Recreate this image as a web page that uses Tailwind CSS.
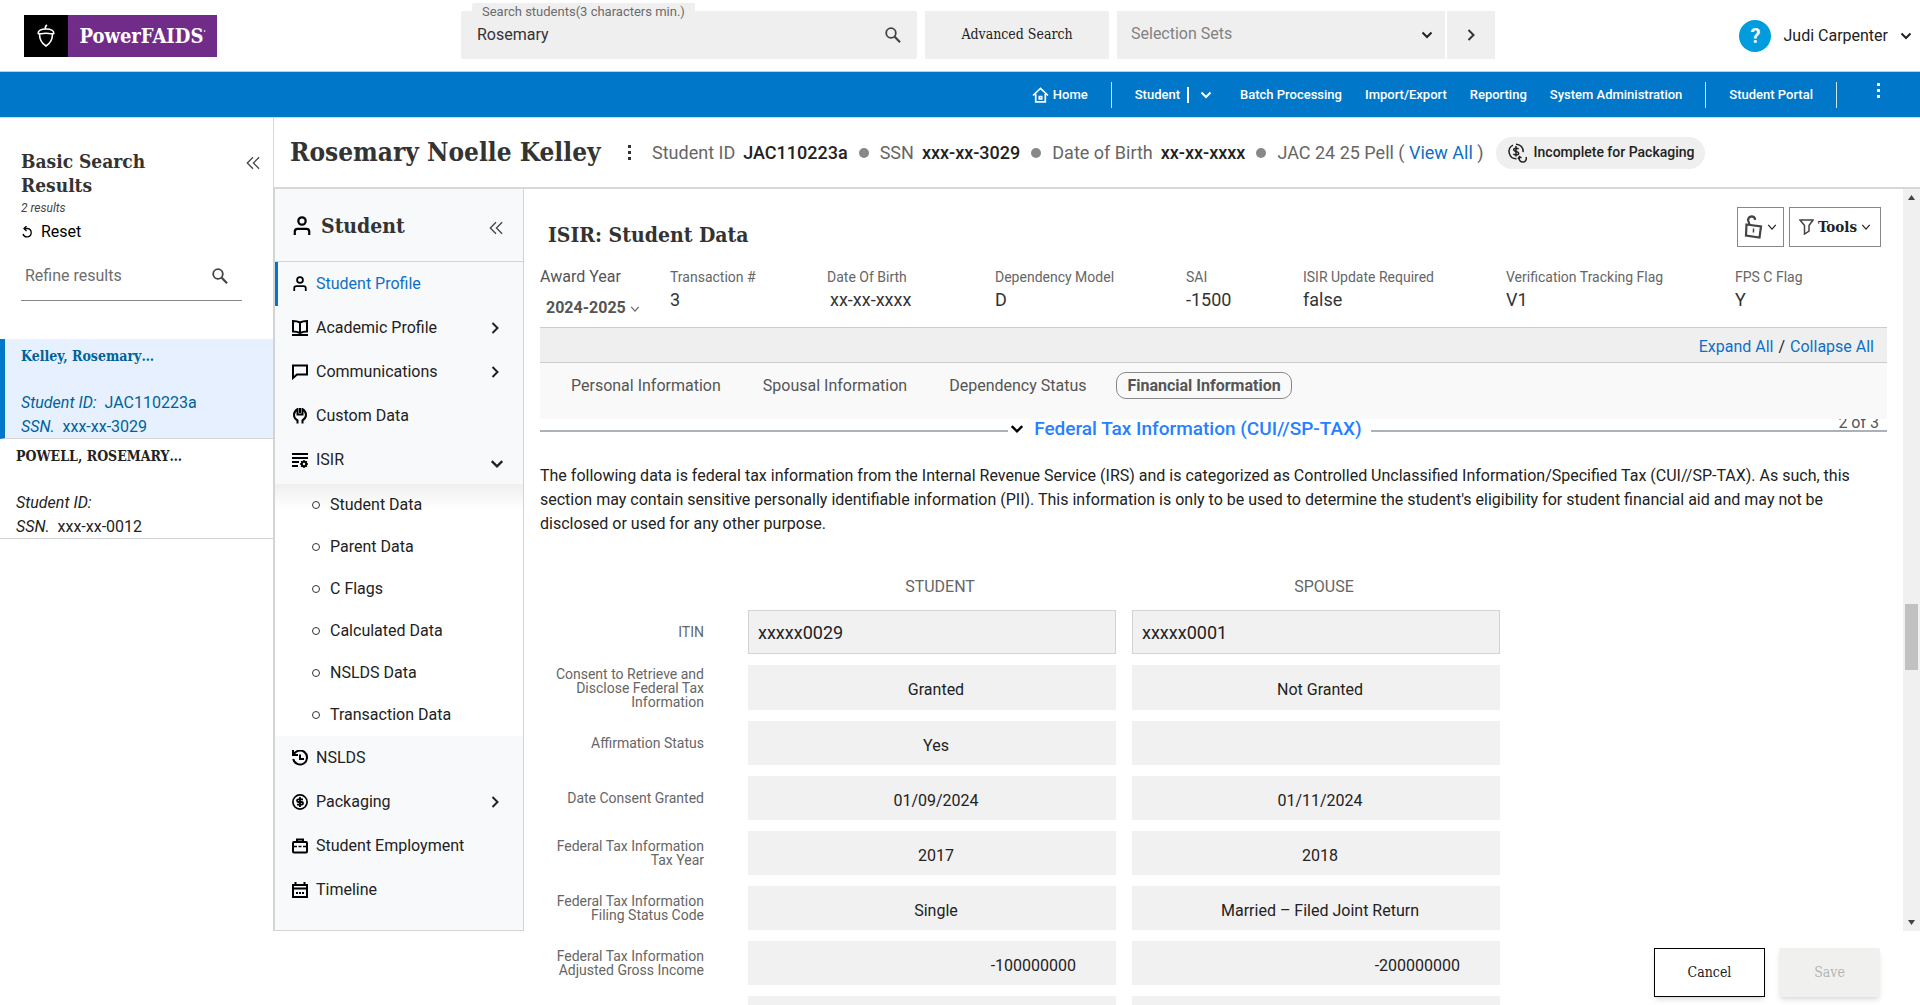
<!DOCTYPE html>
<html lang="en">
<head>
<meta charset="utf-8">
<meta name="viewport" content="width=device-width, initial-scale=1">
<title>PowerFAIDS - ISIR: Student Data</title>
<script src="https://cdn.jsdelivr.net/npm/@tailwindcss/browser@4"></script>
</head>
<body class="flex h-screen flex-col overflow-hidden bg-white font-[Roboto,sans-serif] text-base text-[#222]">
<svg class="hidden" aria-hidden="true">
  <symbol id="chev-down" viewBox="0 0 12 12"><path d="M1.500 3.500 6 8l4.500-4.500" fill="none" stroke="currentColor" stroke-width="2"/></symbol>
  <symbol id="chev-thin" viewBox="0 0 12 12"><path d="M1.500 3.500 6 8.500l4.500-5" fill="none" stroke="currentColor" stroke-width="1.500"/></symbol>
  <symbol id="chev-right" viewBox="0 0 12 12"><path d="M3.500 1 8.500 6l-5 5" fill="none" stroke="currentColor" stroke-width="2"/></symbol>
  <symbol id="chev-dbl" viewBox="0 0 16 16"><path d="M8 1.500 1.500 8 8 14.500M15 1.500 8.500 8l6.500 6.500" fill="none" stroke="currentColor" stroke-width="1.500"/></symbol>
  <symbol id="glass" viewBox="0 0 16 16"><circle cx="6" cy="6" r="4.800" fill="none" stroke="currentColor" stroke-width="1.800"/><path d="m9.500 9.500 5.500 5.700" stroke="currentColor" stroke-width="2.200"/></symbol>
  <symbol id="person" viewBox="0 0 16 18"><circle cx="8" cy="4.500" r="3.300" fill="none" stroke="currentColor" stroke-width="2"/><path d="M1.500 17v-3q0-2.500 2.500-2.500h8q2.500 0 2.500 2.500v3" fill="none" stroke="currentColor" stroke-width="2"/></symbol>
</svg>

<header class="flex h-[72px] shrink-0 items-start border-b border-[#ccc] pt-[11px]">
  <a href="#" class="mt-1 ml-6 flex h-[42px] w-[193px] shrink-0" aria-label="PowerFAIDS home">
    <span class="flex w-11 items-center justify-center bg-black">
      <svg width="18" height="24" viewBox="0 0 18 24" fill="none" stroke="#fff" stroke-width="1.600"><path d="M1.200 9.500C1 6.500 4 5 9 5s8 1.500 7.800 4.500c-2.500.9-5.300-.3-7.800-.3S3.700 10.400 1.200 9.500z"/><path d="M2.500 10c0 5 2.500 9.500 6.500 12 4-2.500 6.500-7 6.500-12M8.500 5c-.5-1.500 0-3 1.500-4"/></svg>
    </span>
    <span class="flex flex-1 items-center justify-center bg-[#712c8a] font-['Roboto_Slab','DejaVu_Serif_Condensed','DejaVu_Serif',serif] text-[20px] font-bold text-white">PowerFAIDS<sup class="text-[8px]">'</sup></span>
  </a>
  <div class="relative ml-[244px] h-12 w-[456px] rounded-xs bg-[#efefef]">
    <label for="q" class="absolute -top-2 left-[11px] rounded-xs bg-[#efefef] px-[10px] text-[13px] leading-[18px] text-[#6b6b6b]">Search students(3 characters min.)</label>
    <input id="q" value="Rosemary" class="h-12 w-full bg-transparent pr-12 pb-[2px] pl-4 text-[#333] outline-none">
    <svg class="absolute top-4 right-4 size-4 text-[#444]"><use href="#glass"/></svg>
  </div>
  <button class="ml-2 h-12 w-[184px] bg-[#efefef] pb-[2px] font-['Roboto_Slab','DejaVu_Serif_Condensed','DejaVu_Serif',serif] text-[14px]">Advanced Search</button>
  <div class="relative ml-2 h-12 w-[328px]">
    <select aria-label="Selection Sets" class="h-12 w-full appearance-none bg-[#efefef] px-[14px] pb-[2px] text-[#828282]"><option>Selection Sets</option></select>
    <svg class="absolute top-[18px] right-3 size-3"><use href="#chev-down"/></svg>
  </div>
  <button class="ml-[2px] flex h-12 w-12 items-center justify-center bg-[#efefef]" aria-label="Go"><svg class="size-3 text-[#333]"><use href="#chev-right"/></svg></button>
  <div class="mt-[9px] mr-2 ml-auto flex items-center">
    <button class="size-8 rounded-full bg-[#009cde] text-xl font-bold text-white" aria-label="Help">?</button>
    <button class="ml-3 flex items-center gap-3">Judi Carpenter <svg class="size-3"><use href="#chev-down"/></svg></button>
  </div>
</header>

<nav class="flex h-[46px] shrink-0 items-center justify-end border-b border-[#d8d8d8] bg-[#0077c8] pr-[39px] text-[13px] font-medium text-white">
  <a href="#" class="flex items-center gap-1"><svg width="17" height="16" viewBox="0 0 17 16" fill="none" stroke="currentColor" stroke-width="1.700"><path d="M1 8.500 8.500 1.500 16 8.500M3.700 7v7.800h9.600V7"/><path d="M7.300 9.500h2.400v2.500H7.300z"/></svg>Home</a>
  <span class="mx-[23px] h-[26px] w-px bg-white/80"></span>
  <a href="#">Student</a>
  <span class="mx-[7px] h-4 w-[2px] bg-white"></span>
  <button class="ml-1 mr-7" aria-label="Student menu"><svg class="size-3"><use href="#chev-down"/></svg></button>
  <a href="#">Batch Processing</a>
  <a href="#" class="ml-[23px]">Import/Export</a>
  <a href="#" class="ml-[23px]">Reporting</a>
  <a href="#" class="ml-[23px]">System Administration</a>
  <span class="mx-[23px] h-[26px] w-px bg-white/80"></span>
  <a href="#">Student Portal</a>
  <span class="mr-10 ml-[23px] h-[26px] w-px bg-white/80"></span>
  <button aria-label="More" class="pb-2"><svg width="4" height="16" fill="currentColor"><path d="M0 0h3v3H0zM0 6h3v3H0zM0 12h3v3H0z"/></svg></button>
</nav>

<div class="flex min-h-0 flex-1">
  <aside class="w-[273px] shrink-0">
    <div class="pt-[31px] pr-[13px] pl-[21px]">
      <div class="flex items-start justify-between">
        <h2 class="font-['Roboto_Slab','DejaVu_Serif_Condensed','DejaVu_Serif',serif] text-[19px] leading-6 font-bold text-[#333]">Basic Search<br>Results</h2>
        <button class="mt-[7px]" aria-label="Collapse results"><svg class="size-[14px] text-[#444]"><use href="#chev-dbl"/></svg></button>
      </div>
      <p class="mt-[3px] text-[12px] leading-4 text-[#444] italic">2 results</p>
      <button class="mt-1 flex items-center gap-2 text-black"><svg width="12" height="12" viewBox="0 0 12 12" fill="none" stroke="currentColor" stroke-width="1.300"><path d="M3.500 2.500h3A4.200 4.200 0 1 1 2 8"/><path d="M5.500 0 3 2.500 5.500 5"/></svg>Reset</button>
      <div class="mt-3 flex h-[45px] w-[221px] items-center border-b border-[#888]">
        <input aria-label="Refine results" placeholder="Refine results" class="w-full bg-transparent pb-1 pl-1 placeholder-[#6e6e6e] outline-none">
        <svg class="mr-[14px] mb-1 size-4 shrink-0 text-[#444]"><use href="#glass"/></svg>
      </div>
    </div>
    <a href="#" class="mt-[38px] block h-[100px] border-b border-l-5 border-b-[#d4d4d4] border-l-[#0077c8] bg-[#e6f0ff] pt-[5px] pl-4 leading-6 text-[#006298]">
      <span class="block font-['Roboto_Slab','DejaVu_Serif_Condensed','DejaVu_Serif',serif] text-[14px] font-bold">Kelley, Rosemary…</span>
      <span class="mt-[23px] block"><i>Student ID:</i>&nbsp; JAC110223a</span>
      <span class="block"><i>SSN.</i>&nbsp; xxx-xx-3029</span>
    </a>
    <a href="#" class="block h-[100px] border-b border-[#d4d4d4] pt-[5px] pl-4 leading-6">
      <span class="block font-['Roboto_Slab','DejaVu_Serif_Condensed','DejaVu_Serif',serif] text-[14px] font-bold">POWELL, ROSEMARY…</span>
      <span class="mt-[23px] block"><i>Student ID:</i></span>
      <span class="block"><i>SSN.</i>&nbsp; xxx-xx-0012</span>
    </a>
  </aside>

  <div class="flex min-w-0 flex-1 flex-col">
    <div class="flex h-[71px] shrink-0 items-center border-b-2 border-l border-[#d8d8d8] pl-4 text-[18px] text-[#666]">
      <h1 class="w-[318px] font-['Roboto_Slab','DejaVu_Serif_Condensed','DejaVu_Serif',serif] text-[26px] font-bold whitespace-nowrap text-[#333]">Rosemary Noelle Kelley</h1>
      <button aria-label="Student actions" class="mr-5 ml-5"><svg width="4" height="16" fill="#333"><path d="M0 0h3v3H0zM0 6h3v3H0zM0 12h3v3H0z"/></svg></button>
      <span>Student ID</span><b class="ml-2 font-medium text-[#222]">JAC110223a</b>
      <span class="mx-[11px] size-[10px] rounded-full bg-[#888]"></span>
      <span>SSN</span><b class="ml-2 font-medium text-[#222]">xxx-xx-3029</b>
      <span class="mx-[11px] size-[10px] rounded-full bg-[#888]"></span>
      <span>Date of Birth</span><b class="ml-2 font-medium text-[#222]">xx-xx-xxxx</b>
      <span class="mx-[11px] size-[10px] rounded-full bg-[#888]"></span>
      <span>JAC 24 25 Pell ( <a href="#" class="text-[#0f6fc6]">View All</a> )</span>
      <span class="ml-3 flex h-8 items-center gap-[5px] rounded-full bg-[#efefef] px-[11px] text-[14px] font-medium text-[#222]">
        <svg width="22" height="20" viewBox="0 0 22 20" fill="none" stroke="#222" stroke-width="1.500"><path d="M9.500 15.800A7.200 7.200 0 0 1 6 2.200M9 1.200a7.200 7.200 0 0 1 7.200 8"/><path d="M11.500 6.200C11 5 6.500 4.700 6.700 6.900c.2 2 5 1 5 3.300 0 2.300-4.800 2-5.200.5M9 3v10.500"/><path d="M12.500 14.500c-1 2.500 1 4.500 3.500 4.500s4-2.500 3-5M11 16l1.500-2.500 2 1.500"/></svg>
        Incomplete for Packaging
      </span>
    </div>

    <div class="flex min-h-0 flex-1">
      <nav class="h-[742px] w-[251px] shrink-0 border-r border-b border-l-2 border-[#d4d4d4] bg-[#f8f9fb]">
        <div class="flex h-[73px] items-center border-b border-[#d4d4d4] pt-[2px] pl-[18px]">
          <svg class="h-5 w-[18px] text-black"><use href="#person"/></svg>
          <h2 class="ml-[10px] font-['Roboto_Slab','DejaVu_Serif_Condensed','DejaVu_Serif',serif] text-[21px] font-bold text-[#333]">Student</h2>
          <button class="mt-1 mr-5 ml-auto" aria-label="Collapse menu"><svg class="size-[14px] text-[#444]"><use href="#chev-dbl"/></svg></button>
        </div>
        <a href="#" class="flex h-11 items-center border-l-3 border-[#0077c8] pl-[14px] text-[#0f6fc6]"><svg class="mr-2 size-4 text-black"><use href="#person"/></svg>Student Profile</a>
        <a href="#" class="flex h-11 items-center pr-[22px] pl-[17px]"><svg class="mr-2 size-4 text-black" viewBox="0 0 16 16" fill="none" stroke="currentColor" stroke-width="2"><path d="M8 2.500Q5 1 1 1v10.500Q5 11.500 8 13q3-1.500 7-1.500V1Q11 1 8 2.500zV13M0 15h16"/></svg>Academic Profile<svg class="ml-auto size-3"><use href="#chev-right"/></svg></a>
        <a href="#" class="flex h-11 items-center pr-[22px] pl-[17px]"><svg class="mr-2 size-4 text-black" viewBox="0 0 16 16" fill="none" stroke="currentColor" stroke-width="2"><path d="M1 1.500h14v9H5l-4 3.500z"/></svg>Communications<svg class="ml-auto size-3"><use href="#chev-right"/></svg></a>
        <a href="#" class="flex h-11 items-center pr-[22px] pl-[17px]"><svg class="mr-2 size-4 text-black" viewBox="0 0 16 16" fill="none" stroke="currentColor" stroke-width="2"><path d="M5.500 15.500v-3.200Q2 10.500 2 6.800 2 3.500 5.500 1.200v5.300h5V1.200Q14 3.500 14 6.800q0 3.700-3.500 5.500v3.200M8 0v5"/></svg>Custom Data</a>
        <a href="#" class="flex h-11 items-center pr-[19px] pl-[17px]"><svg class="mr-2 size-4 text-black" viewBox="0 0 16 16" fill="none" stroke="currentColor" stroke-width="2"><path d="M0 2h16M0 6h16M0 10h7M0 14h6"/><circle cx="12" cy="12" r="2.200"/><path d="M12 8v1.500M12 14.500V16M8 12h1.500M14.500 12H16M9.200 9.200l1 1M14.800 9.200l-1 1M9.200 14.800l1-1M14.800 14.800l-1-1" stroke-width="1.500"/></svg>ISIR<svg class="mt-2 ml-auto size-[14px]"><use href="#chev-down"/></svg></a>
        <ul class="mt-[2px] bg-white bg-linear-to-b from-[#efefef] to-white to-10%">
          <li><a href="#" class="flex h-[42px] items-center gap-[10px] pl-[37px]"><span class="size-2 rounded-full border border-[#333]"></span>Student Data</a></li>
          <li><a href="#" class="flex h-[42px] items-center gap-[10px] pl-[37px]"><span class="size-2 rounded-full border border-[#333]"></span>Parent Data</a></li>
          <li><a href="#" class="flex h-[42px] items-center gap-[10px] pl-[37px]"><span class="size-2 rounded-full border border-[#333]"></span>C Flags</a></li>
          <li><a href="#" class="flex h-[42px] items-center gap-[10px] pl-[37px]"><span class="size-2 rounded-full border border-[#333]"></span>Calculated Data</a></li>
          <li><a href="#" class="flex h-[42px] items-center gap-[10px] pl-[37px]"><span class="size-2 rounded-full border border-[#333]"></span>NSLDS Data</a></li>
          <li><a href="#" class="flex h-[42px] items-center gap-[10px] pl-[37px]"><span class="size-2 rounded-full border border-[#333]"></span>Transaction Data</a></li>
        </ul>
        <a href="#" class="flex h-11 items-center pr-[22px] pl-[17px]"><svg class="mr-2 size-4 text-black" viewBox="0 0 16 16" fill="none" stroke="currentColor" stroke-width="2"><path d="M1 0v5h5M1.500 5A7 7 0 1 1 1.200 9M8 4.500V9h4"/></svg>NSLDS</a>
        <a href="#" class="flex h-11 items-center pr-[22px] pl-[17px]"><svg class="mr-2 size-4 text-black" viewBox="0 0 16 16" fill="none" stroke="currentColor" stroke-width="1.700"><circle cx="8" cy="8" r="7.100"/><path d="M11 5.300H6.200Q5 5.300 5 6.600 5 8 6.200 8h3.600Q11 8 11 9.300q0 1.400-1.200 1.400H5M8 3v10" stroke-width="1.800"/></svg>Packaging<svg class="ml-auto size-3"><use href="#chev-right"/></svg></a>
        <a href="#" class="flex h-11 items-center pr-[22px] pl-[17px]"><svg class="mr-2 size-4 text-black" viewBox="0 0 16 16" fill="none" stroke="currentColor" stroke-width="2"><rect x="1" y="4" width="14" height="10.500" rx="1"/><path d="M5 4V1.500h6V4"/><path d="M1 8.500h4M6.500 8.500h3M11 8.500h4" stroke-width="1.500"/></svg>Student Employment</a>
        <a href="#" class="flex h-11 items-center pr-[22px] pl-[17px]"><svg class="mr-2 size-4 text-black" viewBox="0 0 16 16" fill="none" stroke="currentColor" stroke-width="2"><path d="M1 3h14v12H1zM1 6.500h14M3.500 0v3M12.500 0v3"/><path d="M4 11h2M7 11h2M10 11h2"/></svg>Timeline</a>
      </nav>

      <main class="relative min-w-0 flex-1 overflow-hidden pr-[33px] pl-4">
        <div class="flex items-start justify-between pt-[18px] pr-[6px] pl-2">
          <h2 class="pt-[13px] font-['Roboto_Slab','DejaVu_Serif_Condensed','DejaVu_Serif',serif] text-[21px] leading-[30px] font-bold text-[#333]">ISIR: Student Data</h2>
          <div class="flex gap-[5px]">
            <button class="flex h-10 w-[47px] items-center justify-center gap-1 border border-[#888]" aria-label="Lock"><svg width="19" height="24" viewBox="0 0 19 24" fill="none" stroke="#444" stroke-width="2.200"><path d="m2.500 9.500 14.500 2-1.500 11-13.500-2zM5.500 9.500 4 5Q4.500 1.500 7.500 1.300q3.300 0 3.700 3.500"/><path d="M9.500 13.500v4" stroke-width="1.500"/></svg><svg class="size-[10px]"><use href="#chev-thin"/></svg></button>
            <button class="flex h-10 w-[92px] items-center justify-center gap-1 border border-[#888] font-['Roboto_Slab','DejaVu_Serif_Condensed','DejaVu_Serif',serif] text-[15px] font-bold"><svg width="15" height="16" viewBox="0 0 15 16" fill="none" stroke="#444" stroke-width="1.500"><path d="M1 1h13l-4 5.500V12l-4.500 3V6.500z"/></svg>Tools<svg class="size-[10px]"><use href="#chev-thin"/></svg></button>
          </div>
        </div>
        <div class="mt-[13px] flex h-[64px] text-[#666]">
          <div class="w-[130px] pt-[2px]"><label for="ay" class="block leading-6 text-[#555]">Award Year</label>
            <div class="relative mt-[7px] w-[104px] pl-[6px]"><select id="ay" class="w-full appearance-none bg-transparent font-bold text-[#555]"><option>2024-2025</option></select><svg class="absolute top-2 right-1 size-[10px]"><use href="#chev-thin"/></svg></div></div>
          <dl class="flex flex-1 pt-[3px] text-[14px] leading-[22px]">
            <div class="w-[157px]"><dt>Transaction #</dt><dd class="mt-px text-[18px] text-[#333]">3</dd></div>
            <div class="w-[168px]"><dt>Date Of Birth</dt><dd class="mt-px pl-[3px] text-[18px] text-[#333]">xx-xx-xxxx</dd></div>
            <div class="w-[191px]"><dt>Dependency Model</dt><dd class="mt-px text-[18px] text-[#333]">D</dd></div>
            <div class="w-[117px]"><dt>SAI</dt><dd class="mt-px text-[18px] text-[#333]">-1500</dd></div>
            <div class="w-[203px]"><dt>ISIR Update Required</dt><dd class="mt-px text-[18px] text-[#333]">false</dd></div>
            <div class="w-[229px]"><dt>Verification Tracking Flag</dt><dd class="mt-px text-[18px] text-[#333]">V1</dd></div>
            <div><dt>FPS C Flag</dt><dd class="mt-px text-[18px] text-[#333]">Y</dd></div>
          </dl>
        </div>
        <div class="flex h-9 items-center justify-end gap-[5px] border-y border-[#ccc] bg-[#efefef] pt-1 pr-[13px]"><a href="#" class="text-[#0f6fc6]">Expand All</a> / <a href="#" class="text-[#0f6fc6]">Collapse All</a></div>
        <div class="flex h-14 items-start bg-[#f9f9f9] pt-[9px] pl-[31px] leading-[27px] text-[#555]">
          <a href="#">Personal Information</a>
          <a href="#" class="ml-[42px]">Spousal Information</a>
          <a href="#" class="ml-[42px]">Dependency Status</a>
          <a href="#" class="ml-[30px] rounded-[10px] border border-[#888] px-[10px] leading-[25px] font-bold">Financial Information</a>
        </div>
        <section>
          <div class="relative flex h-6 items-center overflow-hidden">
            <span class="h-[2px] flex-[467_1_0%] bg-[#aab2b8]"></span>
            <h3 class="px-[2px] pb-1"><button class="flex items-center gap-[10px] pr-[7px] text-[19px] leading-5 font-medium text-[#2680ff]"><svg class="size-[14px] text-black"><use href="#chev-down"/></svg>Federal Tax Information (CUI//SP-TAX)</button></h3>
            <span class="h-[2px] flex-[515_1_0%] bg-[#aab2b8]"></span>
            <span class="absolute -top-2 right-2 leading-6 text-[#555]">2 of 3</span>
          </div>
          <p class="mt-[21px] pr-5 leading-6">The following data is federal tax information from the Internal Revenue Service (IRS) and is categorized as Controlled Unclassified Information/Specified Tax (CUI//SP-TAX). As such, this section may contain sensitive personally identifiable information (PII). This information is only to be used to determine the student's eligibility for student financial aid and may not be disclosed or used for any other purpose.</p>
          <table class="mt-[38px] table-fixed border-collapse">
            <colgroup><col class="w-[208px]"><col class="w-[384px]"><col class="w-[384px]"></colgroup>
            <thead><tr class="h-9 align-top leading-[26px] text-[#666]"><td></td><th class="font-normal">STUDENT</th><th class="font-normal">SPOUSE</th></tr></thead>
            <tbody class="[&_input]:block [&_input]:h-11 [&_input]:w-full [&_input]:bg-[#f1f1f1] [&_input]:text-[#222] [&_td]:pr-4 [&_td]:pb-[11px] [&_th]:pr-[44px] [&_th]:pb-[11px] [&_th]:text-right [&_th]:text-[14px] [&_th]:leading-[14px] [&_th]:font-normal [&_th]:text-[#666]">
              <tr><th scope="row">ITIN</th><td><input readonly aria-label="ITIN, student" value="xxxxx0029" class="border border-[#d4d4d4] px-[9px] text-[18px]"></td><td><input readonly aria-label="ITIN, spouse" value="xxxxx0001" class="border border-[#d4d4d4] px-[9px] text-[18px]"></td></tr>
              <tr class="[&_input]:h-[45px]"><th scope="row">Consent to Retrieve and Disclose Federal Tax Information</th><td><input readonly aria-label="Consent, student" value="Granted" class="pt-1 pl-2 text-center"></td><td><input readonly aria-label="Consent, spouse" value="Not Granted" class="pt-1 pl-2 text-center"></td></tr>
              <tr><th scope="row">Affirmation Status</th><td><input readonly aria-label="Affirmation Status, student" value="Yes" class="pt-1 pl-2 text-center"></td><td><input readonly aria-label="Affirmation Status, spouse" value="" class="pt-1 pl-2 text-center"></td></tr>
              <tr><th scope="row">Date Consent Granted</th><td><input readonly aria-label="Date Consent Granted, student" value="01/09/2024" class="pt-1 pl-2 text-center"></td><td><input readonly aria-label="Date Consent Granted, spouse" value="01/11/2024" class="pt-1 pl-2 text-center"></td></tr>
              <tr><th scope="row">Federal Tax Information Tax Year</th><td><input readonly aria-label="Tax Year, student" value="2017" class="pt-1 pl-2 text-center"></td><td><input readonly aria-label="Tax Year, spouse" value="2018" class="pt-1 pl-2 text-center"></td></tr>
              <tr><th scope="row">Federal Tax Information Filing Status Code</th><td><input readonly aria-label="Filing Status Code, student" value="Single" class="pt-1 pl-2 text-center"></td><td><input readonly aria-label="Filing Status Code, spouse" value="Married – Filed Joint Return" class="pt-1 pl-2 text-center"></td></tr>
              <tr><th scope="row">Federal Tax Information Adjusted Gross Income</th><td><input readonly aria-label="Adjusted Gross Income, student" value="-100000000" class="pt-1 pr-10 text-right"></td><td><input readonly aria-label="Adjusted Gross Income, spouse" value="-200000000" class="pt-1 pr-10 text-right"></td></tr>
              <tr><th scope="row"></th><td><input readonly aria-label="Next value, student"></td><td><input readonly aria-label="Next value, spouse"></td></tr>
            </tbody>
          </table>
        </section>
        <div class="absolute top-0 right-0 flex h-[742px] w-[17px] flex-col items-center justify-between bg-[#f0f0f0]" aria-hidden="true">
          <svg class="my-[5px]" width="7" height="7" fill="#444"><path d="M0 6 3.500 1 7 6z"/></svg>
          <span class="mt-[153px] h-[66px] w-[13px] bg-[#c1c1c1]"></span>
          <svg class="my-[5px]" width="7" height="7" fill="#444"><path d="M0 1l3.500 5L7 1z"/></svg>
        </div>
        <div class="absolute right-10 bottom-2 flex gap-[14px] font-['Roboto_Slab','DejaVu_Serif_Condensed','DejaVu_Serif',serif] text-[14px]">
          <button class="h-[49px] w-[111px] border border-black bg-white shadow-md">Cancel</button>
          <button class="h-[49px] w-[101px] rounded-xs bg-[#f0f0ef] text-[#b5b5b5] shadow-md" disabled>Save</button>
        </div>
      </main>
    </div>
  </div>
</div>
</body>
</html>
